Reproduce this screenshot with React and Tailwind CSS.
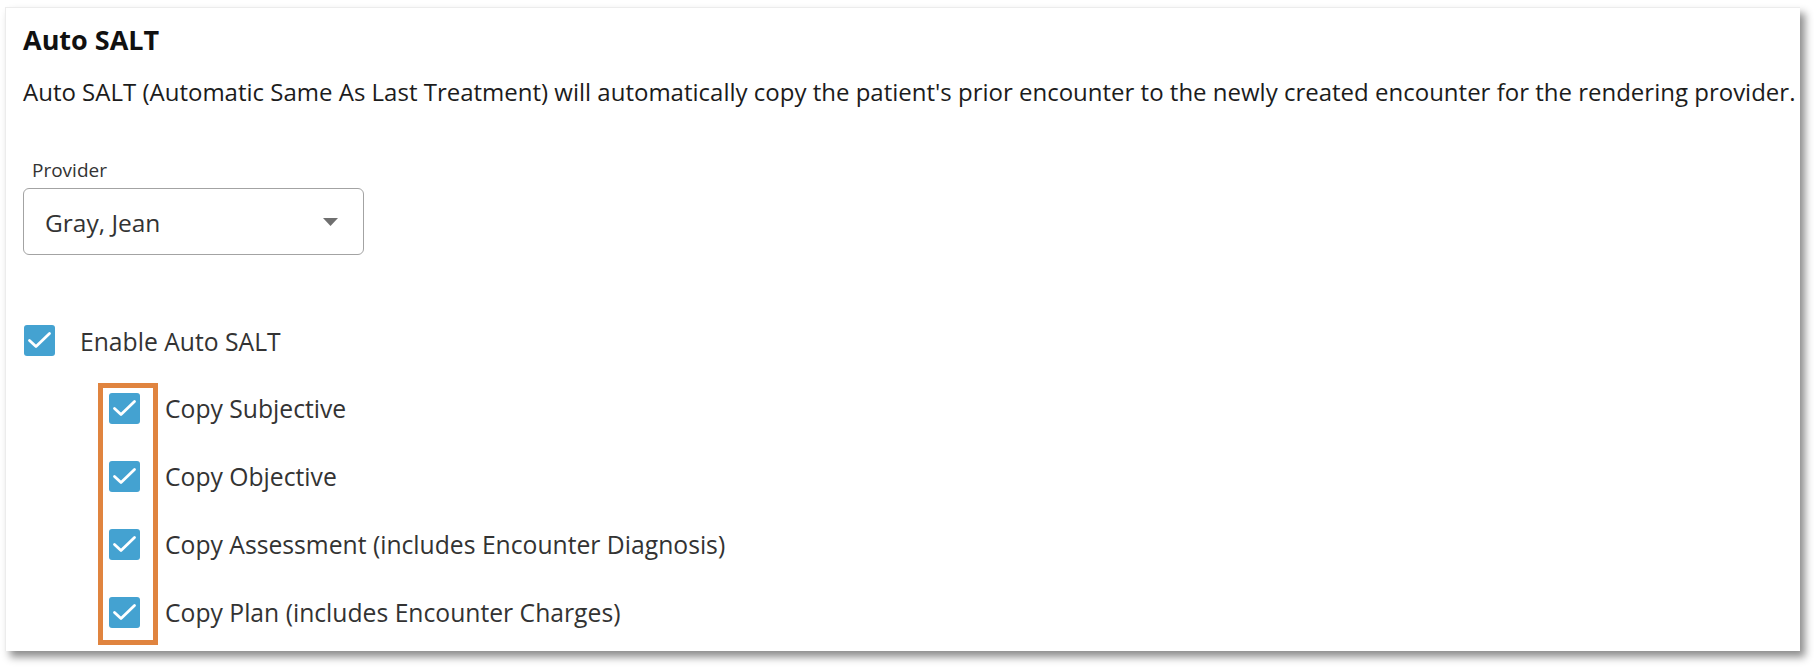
import React from 'react';

const font = { fontFamily: '"Open Sans", "Liberation Sans", sans-serif' };

function CheckBox() {
  return (
    <span className="flex h-[31px] w-[31px] shrink-0 items-center justify-center rounded-[3px] bg-[#44a2d1]">
      <svg width="25" height="18" viewBox="0 0 25 18" fill="none">
        <polyline points="2.5,9.5 9,15.5 22.5,2.5" stroke="#fff" strokeWidth="2.8" strokeLinecap="round" strokeLinejoin="round" />
      </svg>
    </span>
  );
}

const copyOptions = [
  'Copy Subjective',
  'Copy Objective',
  'Copy Assessment (includes Encounter Diagnosis)',
  'Copy Plan (includes Encounter Charges)',
];

export default function App() {
  return (
    <div className="h-[670px] w-[1814px] overflow-hidden bg-white pl-[5px] pt-[7px]" style={font}>
      <div className="h-[644px] w-[1795px] border-l border-t border-[#ececec] bg-white pl-[17px] pt-[15px] shadow-[5px_6px_8px_rgba(0,0,0,0.45)]">
        <h1 className="text-[27px] font-bold leading-[34px] text-[#111]">Auto SALT</h1>
        <p className="mt-[19px] whitespace-nowrap text-[24px] leading-[32px] text-[#1c1c1c]">
          Auto SALT (Automatic Same As Last Treatment) will automatically copy the patient's prior encounter to the newly created encounter for the rendering provider.
        </p>

        <div className="mt-[50px] pl-[9px] text-[19px] leading-[24px] text-[#333]">Provider</div>
        <div className="mt-[6px] flex h-[67px] w-[341px] items-center justify-between rounded-[6px] border border-[#a3a3a3] pl-[21px] pr-[25px]">
          <span className="translate-y-[1px] text-[24.5px] leading-[32px] text-[#333]">Gray, Jean</span>
          <svg width="15" height="8" viewBox="0 0 15 8">
            <polygon points="0,0 15,0 7.5,8" fill="#6f6f6f" />
          </svg>
        </div>

        <div className="mt-[51px] flex h-[68px] items-center gap-[25px] pl-[1px]">
          <CheckBox />
          <span className="translate-y-[2px] text-[24.7px] leading-[32px] text-[#333]">Enable Auto SALT</span>
        </div>

        <div className="relative ml-[86px]">
          {copyOptions.map((label) => (
            <div key={label} className="flex h-[68px] items-center gap-[25px]">
              <CheckBox />
              <span className="translate-y-[1px] text-[24.7px] leading-[32px] text-[#333]">{label}</span>
            </div>
          ))}
          <div className="absolute left-[-11px] top-[9px] bottom-[1px] w-[60px] border-[5px] border-[#e0843f]" />
        </div>
      </div>
    </div>
  );
}
